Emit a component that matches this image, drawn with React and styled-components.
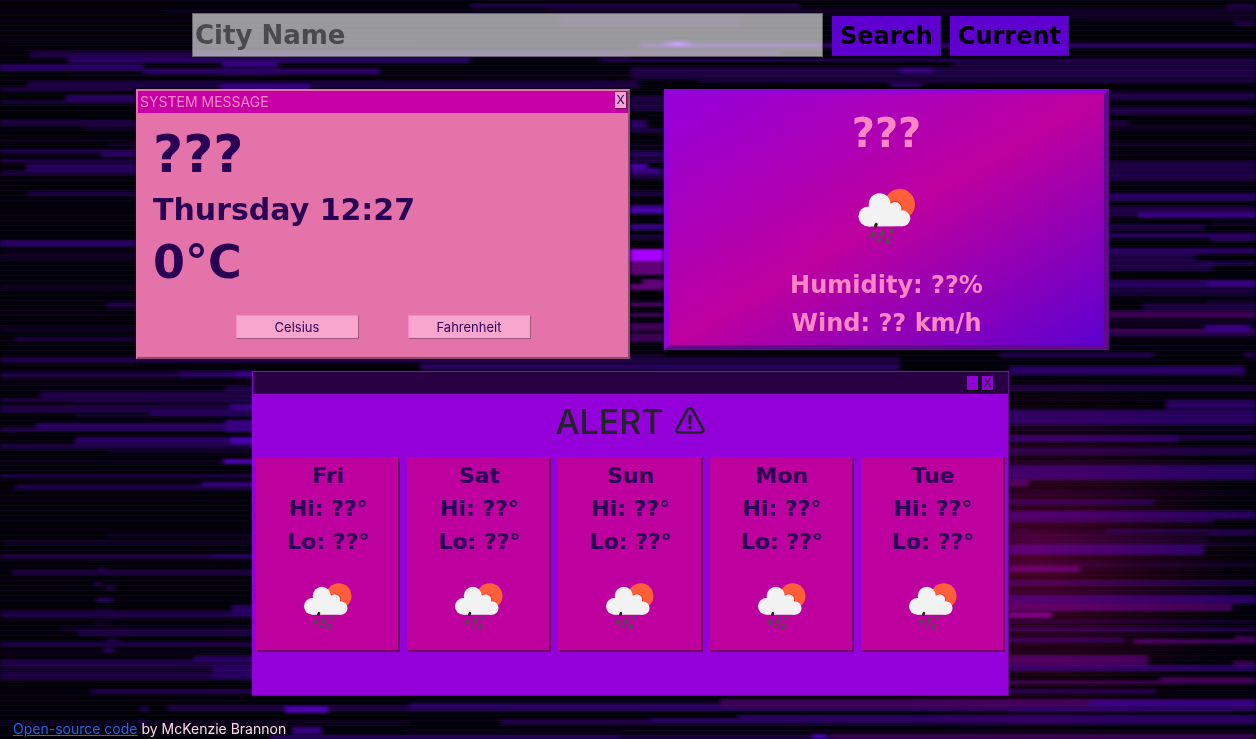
import React from "react";
import styled, { createGlobalStyle } from "styled-components";

const display = '"DejaVu Sans", "Liberation Sans", sans-serif';
const body = 'Inter, "Liberation Sans", sans-serif';

const GlobalStyle = createGlobalStyle`
  * { box-sizing: border-box; }
  body { margin: 0; background: #020008; font-family: ${body}; }
  h1, h2, h3, p { margin: 0; }
`;

const Backdrop = styled.svg`
  position: fixed;
  inset: 0;
  z-index: -1;
  width: 100%;
  height: 100%;
`;

const Page = styled.div`
  display: flex;
  flex-direction: column;
  min-height: 100vh;
`;

const SearchForm = styled.form`
  display: flex;
  align-items: center;
  gap: 9px;
  padding: 13px 187px 0 192px;
`;

const CityInput = styled.input`
  flex: 1;
  min-width: 0;
  height: 44px;
  padding: 0 2px;
  border: 1px solid #65636b;
  border-radius: 0;
  background: rgba(255, 255, 255, 0.6);
  font: bold 26px ${display};
  &::placeholder { color: #4a494d; opacity: 1; }
`;

const SearchButton = styled.button`
  height: 40px;
  margin-top: 2px;
  padding: 0 7px;
  border: 1px solid #5e00d0;
  border-right-color: #4a0e8f;
  border-bottom-color: #4a0e8f;
  background: #5e00d0;
  color: #000;
  font: bold 24px ${display};
`;

const Cards = styled.main`
  display: grid;
  grid-template-columns: 494fr 445fr;
  align-items: start;
  gap: 34px;
  padding: 32px 147px 0 136px;
`;

const MessageWindow = styled.section`
  border: 2px solid;
  border-color: #e373a9 #8e4a6c #8e4a6c #e373a9;
  background: #e373a9;
  color: #2a0055;
`;

const MessageBar = styled.header`
  display: flex;
  justify-content: space-between;
  align-items: flex-start;
  height: 22px;
  padding: 1px 1px 0 2px;
  background: #c600a4;
  color: #ff87c3;
  font-size: 14px;
  line-height: 20px;
`;

const CloseButton = styled.button`
  width: 12px;
  height: 17px;
  padding: 0;
  border: 0 solid #701060;
  border-width: 0 1px 1px 0;
  background: #f9a6cf;
  color: #2a0055;
  font: 12px/16px ${body};
`;

const MessageBody = styled.div`
  display: flex;
  flex-direction: column;
  gap: 4px;
  padding: 13px 15px 18px;
`;

const Reading = styled.p`
  font: bold ${(p) => p.$size}px/${(p) => p.$line}px ${display};
`;

const UnitRow = styled.div`
  display: flex;
  justify-content: center;
  gap: 49px;
  padding-top: 25px;
`;

const UnitButton = styled.button`
  width: 123px;
  height: 24px;
  padding: 0;
  border: 1px solid;
  border-color: #ff87c3 #a0567c #a0567c #ff87c3;
  background: #f9a6cf;
  color: #2a0055;
  font: 13px ${body};
`;

const WeatherCard = styled.section`
  display: flex;
  flex-direction: column;
  align-items: center;
  padding: 15px 0 3px;
  border: 5px solid;
  border-color: #9400d9 #5e0a8a #5e0a8a #9400d9;
  background: linear-gradient(to bottom right, #9400d9, #be009f, #5e00d0);
  color: #ff87c3;
`;

const WeatherIcon = styled.svg`
  display: block;
  width: ${(p) => p.$size}px;
  height: ${(p) => p.$size}px;
  margin-top: ${(p) => p.$gap}px;
`;

const AlertWindow = styled.section`
  margin: 12px 247px 0 252px;
  border: 1px solid;
  border-color: #9400d9 #640a92 #640a92 #9400d9;
  background: #9400d9;
`;

const AlertBar = styled.header`
  display: flex;
  justify-content: flex-end;
  align-items: center;
  gap: 3px;
  height: 22px;
  padding-right: 14px;
  background: #2a0045;
`;

const BarButton = styled.button`
  width: 12px;
  height: 15px;
  padding: 0;
  border: 0 solid #000;
  border-width: 0 1px 1px 0;
  background: #9400d9;
  color: #212529;
  font: 12px/14px ${body};
`;

const AlertTitle = styled.h2`
  display: flex;
  justify-content: center;
  align-items: center;
  gap: 10px;
  height: 54px;
  color: #212529;
  font-size: 34px;
  font-weight: 500;
`;

const WarningIcon = styled.svg`
  width: 32px;
  height: 32px;
`;

const Forecast = styled.div`
  display: grid;
  grid-template-columns: repeat(5, 1fr);
  gap: 7px;
  padding: 9px 3px 43px;
`;

const DayCard = styled.article`
  display: flex;
  flex-direction: column;
  align-items: center;
  padding-bottom: 2px;
  border: 2px solid;
  border-color: #be009f #6d0a60 #6d0a60 #be009f;
  background: #be009f;
  color: #2a0055;
`;

const Footer = styled.footer`
  padding: 23px 13px 0;
  color: #ffd9ee;
  font-size: 14px;
  line-height: 20px;
  a { color: #2463eb; }
`;

const tones = {
  a: "#0f0022",
  b: "#1c0042",
  c: "#27005f",
  d: "#360080",
  e: "#4a00ac",
  p: "#3c0054",
  q: "#600076",
  v: "#a800ff",
};

/* One streak per entry: left, top, right, height, tone. */
const streaks = `
165 10 1256 3 a,0 42 420 1 a,30 51 630 7 b,68 57 470 6 c,0 64 143 7 c,143 68 380 7 c,68 74 800 2 a,
222 62 278 5 d,218 73 272 2 c,27 81 640 7 b,220 84 310 6 d,0 87 136 4 b,66 95 136 7 c,0 101 136 3 b,
0 120 136 6 b,86 126 136 5 a,0 139 136 2 a,108 143 136 4 a,0 149 136 5 b,101 151 136 6 c,0 159 136 4 b,
26 164 136 8 c,0 171 136 4 b,28 191 136 5 b,0 240 136 7 c,0 252 136 8 a,0 285 136 5 a,107 302 136 6 b,
0 313 136 2 a,0 326 136 5 a,15 337 136 4 b,
470 3 800 5 b,550 8 1256 7 a,560 16 740 11 a,1072 14 1256 6 a,1227 4 1256 5 b,1234 21 1256 5 b,
640 43 1256 5 c,500 51 780 4 b,600 58 1000 4 b,952 58 1256 8 b,630 67 1256 12 b,900 68 932 5 d,890 81 922 6 c,700 80 1256 3 b,
630 96 664 6 b,630 103 664 8 b,630 120 647 12 c,630 128 664 5 b,630 144 664 4 a,630 151 664 6 c,630 158 664 5 b,
630 164 648 8 e,630 168 662 6 d,630 174 664 5 b,630 191 664 5 b,630 205 664 9 d,630 208 664 5 e,630 224 664 6 d,
630 235 664 4 b,630 249 664 13 v,630 261 664 4 q,630 265 664 10 q,642 279 664 6 q,630 284 664 6 q,630 302 664 5 p,
630 313 664 4 p,630 323 664 8 p,630 333 664 9 p,630 353 664 6 a,
1109 92 1256 8 b,1109 107 1256 8 b,1109 121 1129 5 b,1109 125 1256 5 a,1109 142 1256 5 a,1109 153 1256 2 a,
1109 161 1256 20 b,1109 184 1256 1 a,1109 193 1256 8 c,1109 206 1256 11 b,1138 212 1256 6 d,1109 224 1205 6 b,
1210 222 1256 4 a,1109 233 1256 5 c,1210 235 1256 6 c,1109 248 1256 6 c,1109 254 1196 7 b,1109 261 1213 10 b,1200 262 1256 3 c,
1109 280 1256 8 c,1208 280 1256 6 d,1109 289 1256 4 b,1109 294 1256 2 b,1207 300 1256 6 a,1142 303 1256 7 b,
1109 311 1256 7 p,1109 320 1256 6 a,1109 328 1256 9 b,1109 329 1256 4 p,1205 325 1250 7 d,1109 345 1250 2 a,
1000 352 1154 6 b,1244 352 1256 6 b,
15 340 136 2 a,0 357 900 6 b,0 372 256 6 b,180 371 256 6 c,235 371 256 6 d,420 364 900 6 c,0 383 256 2 a,225 386 256 7 b,
40 391 256 7 b,76 399 256 4 b,0 398 256 4 b,0 405 256 8 b,230 404 256 6 d,150 411 250 4 c,76 415 256 2 b,
35 423 256 8 c,225 420 256 12 d,0 427 36 5 b,75 437 256 8 c,230 437 256 7 e,0 444 256 5 b,107 450 256 4 a,
0 461 256 2 a,223 459 256 5 e,0 474 256 4 b,15 484 256 6 b,202 482 256 4 d,107 534 256 3 a,4 540 256 5 a,
0 554 256 5 b,210 554 256 4 c,12 570 256 5 b,97 567 106 5 b,94 582 103 4 b,106 585 116 5 b,96 598 113 4 c,
95 608 112 3 a,106 616 122 3 b,94 621 110 4 a,95 630 104 6 c,105 639 120 4 b,104 648 114 5 c,
0 611 256 7 b,231 605 256 11 c,60 626 256 6 a,78 630 256 6 b,0 642 256 5 b,0 652 256 2 a,0 659 256 10 b,
194 656 256 6 c,0 671 256 9 b,213 665 256 14 c,90 689 256 5 b,140 706 149 6 b,167 705 410 6 b,285 706 328 7 e,
0 721 410 4 a,138 720 146 5 b,292 727 322 7 d,270 735 640 4 c,409 703 1256 8 c,720 699 1256 9 p,500 719 1256 6 b,
650 718 1256 4 c,738 715 1256 7 c,405 730 1256 2 a,620 735 1256 4 b,812 734 826 5 e,830 734 1256 5 p,
1009 366 1245 9 c,1009 385 1256 6 b,1009 397 1256 1 a,1166 400 1256 9 c,1009 410 1256 15 c,1009 428 1256 2 a,
1009 435 1178 7 c,1178 435 1256 5 b,1009 447 1256 8 b,1009 461 1256 2 a,1009 465 1256 15 c,1009 480 1029 6 p,
1009 493 1250 1 b,1009 499 1154 6 b,1009 511 1256 8 c,1009 518 1214 5 b,1009 529 1030 12 a,1105 529 1256 7 b,
1030 532 1208 10 a,1009 543 1256 2 b,1009 545 1204 10 c,1009 562 1256 5 a,1009 566 1080 6 p,1009 580 1256 6 b,
1009 591 1232 2 a,1009 595 1256 9 c,1009 603 1232 8 p,1009 612 1052 6 q,1009 621 1256 2 b,1009 627 1256 5 b,
1009 637 1124 6 b,1134 639 1256 5 p,1235 636 1256 4 p,1009 655 1148 10 p,1009 665 1256 6 c,1233 661 1256 4 p,
1160 677 1256 7 p,1009 681 1256 3 p,1009 689 1156 5 b,1160 693 1256 1 a,1089 700 1256 7 d,1009 706 1232 6 c,1009 715 1256 8 c
`
  .split(",")
  .map((entry) => {
    const [left, top, right, height, tone] = entry.trim().split(" ");
    return { x: +left, y: +top, width: right - left, height: +height, fill: tones[tone] };
  });

function GlitchBackdrop() {
  return (
    <Backdrop viewBox="0 0 1256 739" preserveAspectRatio="xMidYMid slice" aria-hidden="true">
      <defs>
        <filter id="soft" x="0" y="0" width="100%" height="100%" colorInterpolationFilters="sRGB">
          <feGaussianBlur stdDeviation="2 1" />
        </filter>
        <radialGradient id="glow">
          <stop offset="0" stopColor="#b00050" stopOpacity="0.42" />
          <stop offset="0.5" stopColor="#900048" stopOpacity="0.2" />
          <stop offset="1" stopColor="#700040" stopOpacity="0" />
        </radialGradient>
        <radialGradient id="spark">
          <stop offset="0" stopColor="#8a20ff" />
          <stop offset="1" stopColor="#5000c0" stopOpacity="0" />
        </radialGradient>
        <pattern id="scan" width="8" height="5" patternUnits="userSpaceOnUse">
          <rect width="8" height="1" fill="#5a20a0" opacity="0.09" />
        </pattern>
      </defs>
      <rect width="1256" height="739" fill="#020008" />
      <g filter="url(#soft)">
        {streaks.map((s, i) => <rect key={i} {...s} />)}
      </g>
      <ellipse cx="678" cy="44" rx="20" ry="5" fill="url(#spark)" />
      <ellipse cx="1035" cy="560" rx="210" ry="190" fill="url(#glow)" style={{ mixBlendMode: "screen" }} />
      <rect width="1256" height="739" fill="url(#scan)" />
    </Backdrop>
  );
}

const drops = [
  [36, 68.7, 1.7], [45.7, 67.3, 1.5], [55.3, 64.7, 0.3], [42.7, 74.3, 0.2], [51.7, 74.3, 1.3],
];

function RainIcon({ size, gap }) {
  return (
    <WeatherIcon $size={size} $gap={gap} viewBox="0 0 100 100" role="img" aria-label="Sun and rain">
      <defs>
        <clipPath id="sunDisc"><circle cx="62.8" cy="38.2" r="15.2" /></clipPath>
      </defs>
      <circle cx="62.8" cy="38.2" r="15.2" fill="#ff5e3a" />
      <g clipPath="url(#sunDisc)" fill="#ff2a10">
        <circle cx="58" cy="42.5" r="7.4" />
        <circle cx="65" cy="52.3" r="8.6" />
      </g>
      <g fill="#f2f2f2">
        <circle cx="31.4" cy="50.4" r="10" />
        <circle cx="42.6" cy="38" r="10.8" />
        <circle cx="58" cy="42.5" r="6.5" />
        <circle cx="65.3" cy="52.3" r="8" />
        <path d="M31.4 60.4V44l8-8h10l12 5 4 10v9.3Z" />
      </g>
      <g strokeLinecap="round" strokeWidth="3.8" stroke="#4d4d4d">
        {drops.map(([x, y, l]) => (
          <line key={x} x1={x - 0.5 + l / 3} y1={y - l} x2={x - 0.5 - l / 3} y2={y + l} />
        ))}
        <line x1="39.2" y1="58.5" x2="38.6" y2="60" stroke="#222" strokeWidth="3.2" />
      </g>
    </WeatherIcon>
  );
}

const days = ["Fri", "Sat", "Sun", "Mon", "Tue"];

export default function App() {
  return (
    <>
      <GlobalStyle />
      <GlitchBackdrop />
      <Page>
        <SearchForm onSubmit={(e) => e.preventDefault()}>
          <CityInput type="text" placeholder="City Name" aria-label="City Name" />
          <SearchButton type="submit">Search</SearchButton>
          <SearchButton type="button">Current</SearchButton>
        </SearchForm>
        <Cards>
          <MessageWindow>
            <MessageBar>
              SYSTEM MESSAGE
              <CloseButton type="button">X</CloseButton>
            </MessageBar>
            <MessageBody>
              <Reading as="h1" $size={52} $line={56}>???</Reading>
              <Reading $size={30} $line={48}>Thursday 12:27</Reading>
              <Reading $size={46} $line={48}>0°C</Reading>
              <UnitRow>
                <UnitButton type="button">Celsius</UnitButton>
                <UnitButton type="button">Fahrenheit</UnitButton>
              </UnitRow>
            </MessageBody>
          </MessageWindow>
          <WeatherCard>
            <Reading as="h2" $size={40} $line={48}>???</Reading>
            <RainIcon size={100} gap={9} />
            <Reading $size={24} $line={38}>Humidity: ??%</Reading>
            <Reading $size={24} $line={38}>Wind: ?? km/h</Reading>
          </WeatherCard>
        </Cards>
        <AlertWindow>
          <AlertBar>
            <BarButton type="button">-</BarButton>
            <BarButton type="button">X</BarButton>
          </AlertBar>
          <AlertTitle>
            ALERT
            <WarningIcon viewBox="0 0 32 32" fill="none" stroke="#212529" aria-hidden="true">
              <path d="M13.9 4.2a2.4 2.4 0 0 1 4.2 0l11.2 20.1a2.2 2.2 0 0 1-1.9 3.2H4.6a2.2 2.2 0 0 1-1.9-3.2Z" strokeWidth="2.6" strokeLinejoin="round" />
              <path d="M16 11v7" strokeWidth="3" strokeLinecap="round" />
              <circle cx="16" cy="22.6" r="1.8" fill="#212529" stroke="none" />
            </WarningIcon>
          </AlertTitle>
          <Forecast>
            {days.map((day) => (
              <DayCard key={day}>
                <Reading as="h3" $size={22} $line={33}>{day}</Reading>
                <Reading $size={22} $line={33}>Hi: ??°</Reading>
                <Reading $size={22} $line={33}>Lo: ??°</Reading>
                <RainIcon size={84} gap={6} />
              </DayCard>
            ))}
          </Forecast>
        </AlertWindow>
        <Footer>
          <a href="#source">Open-source code</a> by McKenzie Brannon
        </Footer>
      </Page>
    </>
  );
}
